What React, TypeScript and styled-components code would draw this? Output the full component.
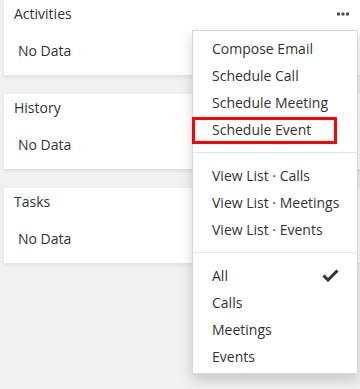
import { createGlobalStyle } from "styled-components";
import styled from "styled-components";

const GlobalStyle = createGlobalStyle`
    html, body {
        margin: 0;
        padding: 0;
        background: #f1f1f1;
        font-family: "Open Sans", "Liberation Sans", sans-serif;
        color: #333;
    }
`

const Page = styled.div`
    position: relative;
    width: 360px;
    height: 389px;
    overflow: hidden;
    display: flex;
    flex-direction: column;
    gap: 19px;
    padding-left: 4px;
    box-sizing: border-box;
`

const Panel = styled.section`
    background: #fff;
    box-shadow: 0 2px 4px rgba(0, 0, 0, 0.08);
    padding: 4px 11px 14px 10px;
    height: 75px;
    box-sizing: border-box;
`

const PanelHeader = styled.div`
    display: flex;
    align-items: center;
    justify-content: space-between;
    height: 20px;
`

const PanelTitle = styled.div`
    font-size: 14px;
    line-height: 20px;
`

const MoreButton = styled.div`
    display: flex;
    align-items: center;
    color: #333;
    margin-top: -1px;
`

const PanelBody = styled.div`
    font-size: 14px;
    line-height: 20px;
    padding: 17px 4px 0;
`

const Menu = styled.div`
    position: absolute;
    left: 192px;
    top: 30px;
    width: 166px;
    box-sizing: border-box;
    background: #fff;
    border: 1px solid rgba(0, 0, 0, 0.15);
    box-shadow: 0 6px 12px rgba(0, 0, 0, 0.175);
    padding: 4px 0 3px;
`

const MenuItem = styled.div<{ $boxed?: boolean }>`
    position: relative;
    display: flex;
    align-items: center;
    justify-content: space-between;
    height: 27px;
    padding: 0 18px 0 19px;
    font-size: 14px;
    line-height: 27px;
    white-space: nowrap;

    ${props => props.$boxed && `
        &::after {
            content: "";
            position: absolute;
            left: -1px;
            top: 1px;
            width: 145px;
            height: 27px;
            box-sizing: border-box;
            border: 3px solid #f00;
        }
    `}
`

const Divider = styled.div`
    height: 1px;
    background: #e5e5e5;
    margin: 9px 0;
`

const Dots = () => (
    <svg width="12" height="4" viewBox="0 0 12 4">
        <rect x="0" y="0.5" width="3" height="3" rx="0.6" fill="#4a4a4a" />
        <rect x="4.5" y="0.5" width="3" height="3" rx="0.6" fill="#4a4a4a" />
        <rect x="9" y="0.5" width="3" height="3" rx="0.6" fill="#4a4a4a" />
    </svg>
)

const Check = () => (
    <svg width="17" height="13" viewBox="0 0 17 13">
        <path d="M1.5 6.5 L6 11 L15.5 1.5" fill="none" stroke="#333" strokeWidth="3" strokeLinejoin="miter" />
    </svg>
)

const panels = ["Activities", "History", "Tasks"];

const actions = ["Compose Email", "Schedule Call", "Schedule Meeting", "Schedule Event"];
const lists = ["View List · Calls", "View List · Meetings", "View List · Events"];
const filters = ["All", "Calls", "Meetings", "Events"];

export default function App() {
    return (
        <>
            <GlobalStyle />
            <Page>
                {panels.map((title, i) => (
                    <Panel key={title}>
                        <PanelHeader>
                            <PanelTitle>{title}</PanelTitle>
                            {i === 0 && <MoreButton><Dots /></MoreButton>}
                        </PanelHeader>
                        <PanelBody>No Data</PanelBody>
                    </Panel>
                ))}
                <Menu>
                    {actions.map(a => (
                        <MenuItem key={a} $boxed={a === "Schedule Event"}>{a}</MenuItem>
                    ))}
                    <Divider />
                    {lists.map(l => <MenuItem key={l}>{l}</MenuItem>)}
                    <Divider />
                    {filters.map(f => (
                        <MenuItem key={f}>
                            {f}
                            {f === "All" && <Check />}
                        </MenuItem>
                    ))}
                </Menu>
            </Page>
        </>
    );
}
